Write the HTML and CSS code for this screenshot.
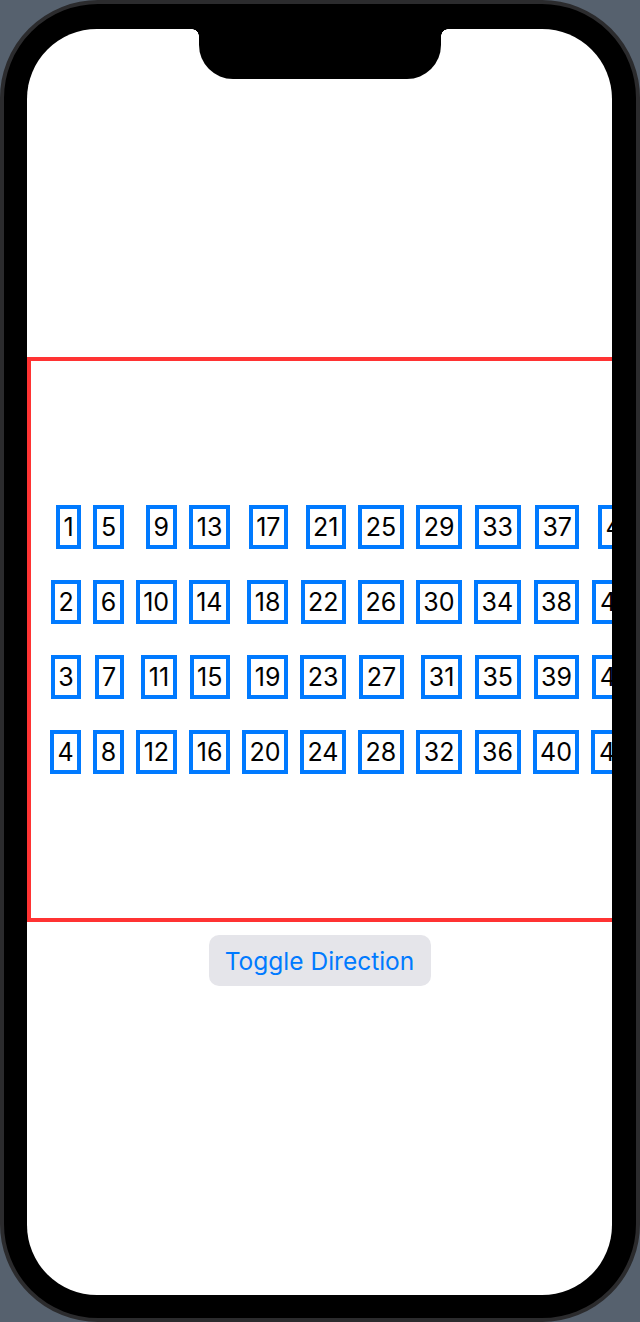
FILE: index.html
```html
<!DOCTYPE html>
<html lang="en">
<head>
<meta charset="utf-8">
<title>Grid</title>
<link rel="stylesheet" href="styles.css">
</head>
<body>
<div class="phone">
  <div class="screen">
    <div class="notch"></div>
    <div class="frame">
      <div class="grid">
        <div class="cell">1</div><div class="cell">2</div><div class="cell">3</div><div class="cell">4</div>
        <div class="cell">5</div><div class="cell">6</div><div class="cell">7</div><div class="cell">8</div>
        <div class="cell">9</div><div class="cell">10</div><div class="cell">11</div><div class="cell">12</div>
        <div class="cell">13</div><div class="cell">14</div><div class="cell">15</div><div class="cell">16</div>
        <div class="cell">17</div><div class="cell">18</div><div class="cell">19</div><div class="cell">20</div>
        <div class="cell">21</div><div class="cell">22</div><div class="cell">23</div><div class="cell">24</div>
        <div class="cell">25</div><div class="cell">26</div><div class="cell">27</div><div class="cell">28</div>
        <div class="cell">29</div><div class="cell">30</div><div class="cell">31</div><div class="cell">32</div>
        <div class="cell">33</div><div class="cell">34</div><div class="cell">35</div><div class="cell">36</div>
        <div class="cell">37</div><div class="cell">38</div><div class="cell">39</div><div class="cell">40</div>
        <div class="cell">41</div><div class="cell">42</div><div class="cell">43</div><div class="cell">44</div>
        <div class="cell">45</div><div class="cell">46</div><div class="cell">47</div><div class="cell">48</div>
      </div>
    </div>
    <button class="toggle" type="button">Toggle Direction</button>
  </div>
</div>
</body>
</html>
```
FILE: styles.css
```css
html, body {
  margin: 0;
  padding: 0;
}
body {
  background: #56616e;
  width: 640px;
  height: 1322px;
  overflow: hidden;
}
.phone {
  box-sizing: border-box;
  width: 640px;
  height: 1322px;
  border-radius: 98px;
  background: #000;
  border: 4px solid #2b2b2d;
  padding: 25px 24px 23px 23px;
}
.screen {
  position: relative;
  box-sizing: border-box;
  width: 585px;
  height: 1266px;
  border-radius: 70px;
  background: #fff;
  overflow: hidden;
  display: flex;
  flex-direction: column;
  justify-content: center;
  padding: 70px 0 51px;
}
.notch {
  position: absolute;
  left: 172px;
  top: 0;
  width: 242px;
  height: 50px;
  background: #000;
  border-radius: 0 0 34px 34px;
}
.notch::before,
.notch::after {
  content: "";
  position: absolute;
  top: 0;
  width: 7px;
  height: 7px;
}
.notch::before {
  left: -7px;
  background: radial-gradient(circle at 0 100%, transparent 6.5px, #000 7px);
}
.notch::after {
  right: -7px;
  background: radial-gradient(circle at 100% 100%, transparent 6.5px, #000 7px);
}
.frame {
  box-sizing: border-box;
  align-self: flex-start;
  flex: none;
  width: 700px;
  height: 565px;
  border: 4px solid #ff3333;
  display: flex;
  align-items: center;
  padding-left: 19px;
}
.grid {
  display: grid;
  grid-auto-flow: column;
  grid-template-rows: repeat(4, 44px);
  row-gap: 31px;
  column-gap: 12px;
  justify-items: end;
}
.cell {
  box-sizing: border-box;
  height: 44px;
  border: 4px solid #007aff;
  padding: 0 3.5px;
  font-family: Inter, "Noto Sans", sans-serif;
  font-size: 25px;
  line-height: 36px;
  color: #000;
  font-variant-numeric: proportional-nums;
}
.toggle {
  align-self: center;
  flex: none;
  margin-top: 13px;
  width: 222px;
  height: 51px;
  border: 0;
  border-radius: 10px;
  background: #e5e5ea;
  color: #007aff;
  font-family: Inter, "Noto Sans", sans-serif;
  font-size: 24.5px;
  padding: 0;
}
```
